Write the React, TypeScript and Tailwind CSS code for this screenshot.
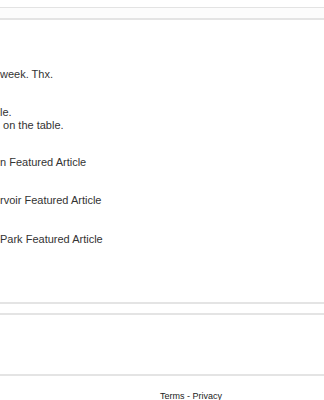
import React from 'react';

const items = [
  { lines: ['week. Thx.'], gap: 'mt-[48px]' },
  { lines: ['le.', ' on the table.'], gap: 'mt-[25px]' },
  { lines: ['n Featured Article'], gap: 'mt-[24px]' },
  { lines: ['rvoir Featured Article'], gap: 'mt-[25px]' },
  { lines: ['Park Featured Article'], gap: 'mt-[26px]' },
];

export default function App() {
  return (
    <div className="w-[324px] h-[400px] overflow-hidden bg-white text-[#333] font-['Liberation_Sans',Arial,sans-serif]">
      {/* top bar edge */}
      <div className="h-[8px] border-b border-[#e3e3e3]" />
      <div className="h-[10px] bg-[#fcfcfc]" />

      {/* list panel */}
      <div className="h-[286px] border-t-2 border-b-2 border-[#e4e4e4] bg-white">
        {items.map((it, i) => (
          <div key={i} className={`${it.gap} text-[11px] leading-[13px] whitespace-pre`}>
            {it.lines.map((l, j) => (
              <div key={j}>{l}</div>
            ))}
          </div>
        ))}
      </div>

      <div className="h-[9px] bg-white" />

      {/* second panel */}
      <div className="h-[63px] border-t-2 border-b-2 border-[#e4e4e4] bg-white" />

      {/* footer */}
      <div className="mt-[15px] flex justify-center pl-[58px] text-[9px] leading-[10px] text-[#222]">
        <span>Terms - Privacy</span>
      </div>
    </div>
  );
}
